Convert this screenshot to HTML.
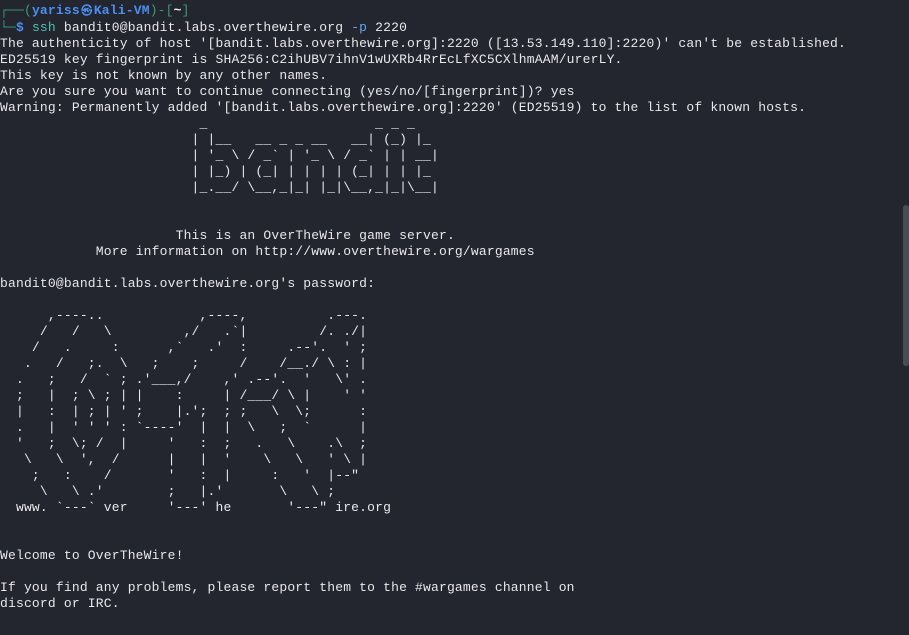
<!DOCTYPE html>
<html><head><meta charset="utf-8"><style>
html,body{margin:0;padding:0;background:#23252f;width:909px;height:635px;overflow:hidden}
pre{margin:0;position:absolute;left:0;top:3px;font-family:"Liberation Mono","DejaVu Sans Mono",monospace;font-size:13px;letter-spacing:0.18px;line-height:16px;color:#e8e8ea;white-space:pre}
.g{color:#3a9c78}.b{color:#4a8ff0;font-weight:bold}.s{color:#4fc1ae}.o{color:#5fa8f0}
.k{display:inline-block;width:14px;font-size:11px;text-align:center}
#sb{position:absolute;left:903px;top:205px;width:6px;height:161px;background:#4a4c55;border-radius:3px}
</style></head><body>
<pre><span class="g">┌──(</span><span class="b">yariss<span class="k">㉿</span>Kali-VM</span><span class="g">)-[</span><b>~</b><span class="g">]</span>
<span class="g">└─</span><span class="b">$</span> <span class="s">ssh</span> bandit0@bandit.labs.overthewire.org <span class="o">-p</span> 2220
The authenticity of host '[bandit.labs.overthewire.org]:2220 ([13.53.149.110]:2220)' can't be established.
ED25519 key fingerprint is SHA256:C2ihUBV7ihnV1wUXRb4RrEcLfXC5CXlhmAAM/urerLY.
This key is not known by any other names.
Are you sure you want to continue connecting (yes/no/[fingerprint])? yes
Warning: Permanently added '[bandit.labs.overthewire.org]:2220' (ED25519) to the list of known hosts.
                         _                     _ _ _
                        | |__   __ _ _ __   __| (_) |_
                        | '_ \ / _` | '_ \ / _` | | __|
                        | |_) | (_| | | | | (_| | | |_
                        |_.__/ \__,_|_| |_|\__,_|_|\__|


                      This is an OverTheWire game server.
            More information on http://www.overthewire.org/wargames

bandit0@bandit.labs.overthewire.org's password:

      ,----..            ,----,          .---.
     /   /   \         ,/   .`|         /. ./|
    /   .     :      ,`   .'  :     .--'.  ' ;
   .   /   ;.  \   ;    ;     /    /__./ \ : |
  .   ;   /  ` ; .'___,/    ,' .--'.  '   \' .
  ;   |  ; \ ; | |    :     | /___/ \ |    ' '
  |   :  | ; | ' ;    |.';  ; ;   \  \;      :
  .   |  ' ' ' : `----'  |  |  \   ;  `      |
  '   ;  \; /  |     '   :  ;   .   \    .\  ;
   \   \  ',  /      |   |  '    \   \   ' \ |
    ;   :    /       '   :  |     :   '  |--"
     \   \ .'        ;   |.'       \   \ ;
  www. `---` ver     '---' he       '---" ire.org


Welcome to OverTheWire!

If you find any problems, please report them to the #wargames channel on
discord or IRC.</pre>
<div id="sb"></div>
</body></html>
